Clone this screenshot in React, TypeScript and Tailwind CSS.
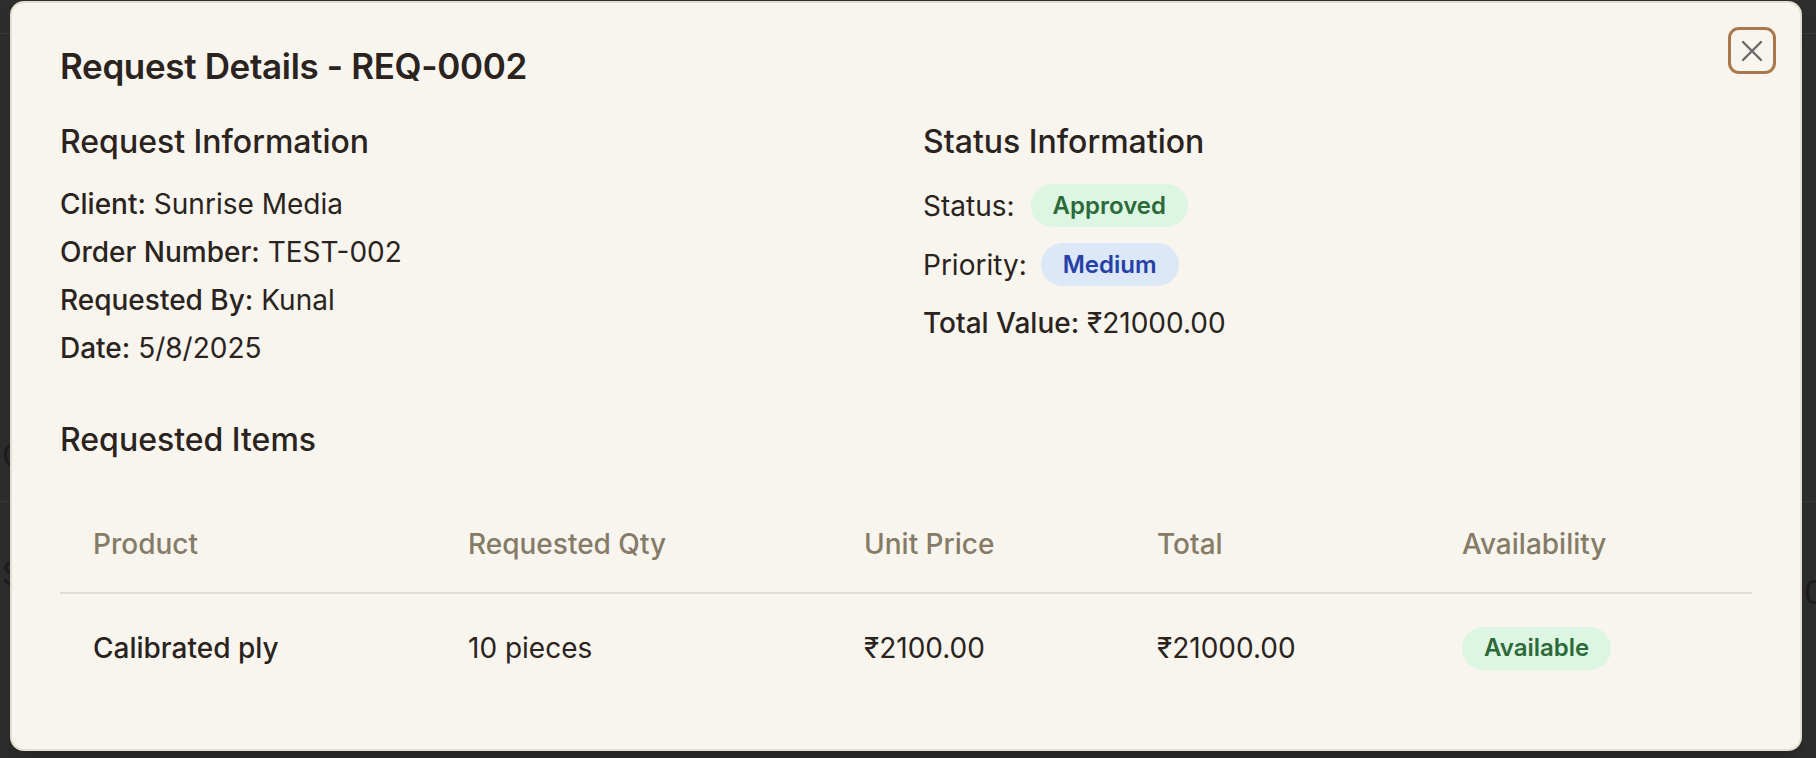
import { X } from "lucide-react";

const cols = ["Product", "Requested Qty", "Unit Price", "Total", "Availability"];

function Badge({ tone, children }: { tone: "green" | "blue"; children: React.ReactNode }) {
  const cls =
    tone === "green"
      ? "bg-[#ddf6e3] text-[#2c6a39]"
      : "bg-[#dce7f8] text-[#2541a6]";
  return (
    <span className={`inline-flex h-[43px] items-center rounded-full px-[22px] text-[24px] font-semibold ${cls}`}>
      {children}
    </span>
  );
}

function Field({ label, value }: { label: string; value: string }) {
  return (
    <p className="text-[28px] leading-[42px]">
      <span className="font-medium">{label}</span> {value}
    </p>
  );
}

export default function App() {
  return (
    <div className="relative h-[758px] w-full overflow-hidden bg-[#2d2d2d] font-['Inter',sans-serif]">
      {/* page behind the dialog, dimmed */}
      <div className="flex flex-col text-[32px] leading-[39px] text-[#1c1c1c]">
        <div className="h-[34px] border-b border-[#393939]" />
        <div className="h-[400px]" />
        <div className="flex h-[68px] items-start border-b border-[#393939] pl-[2px] pt-[2px]">
          <span className="w-[8px] overflow-hidden">C</span>
        </div>
        <div className="flex h-[96px] items-start justify-between pl-[2px] pt-[52px]">
          <span className="w-[8px] overflow-hidden">S</span>
          <span className="mt-[19px] w-[12px] overflow-hidden text-right">0</span>
        </div>
      </div>

      {/* dialog */}
      <div className="absolute left-[10px] top-[1px] flex h-[750px] w-[1792px] flex-col rounded-[14px] border-2 border-[#e3ded2] bg-[#f8f5ee] px-[48px] pt-[41px] text-[#2a2320] shadow-xl">
        <button className="absolute right-[24px] top-[24px] flex h-[47px] w-[48px] items-center justify-center rounded-[11px] border-[3px] border-[#a8784c] text-[#686868]">
          <X size={36} strokeWidth={1.6} />
        </button>

        <h2 className="text-[35px] leading-[44px] font-semibold tracking-[-0.01em]">Request Details - REQ-0002</h2>

        <div className="mt-[30px] grid grid-cols-2 gap-x-[34px]">
          <div>
            <h3 className="text-[32px] leading-[48px] font-medium">Request Information</h3>
            <div className="mt-[17px] flex flex-col gap-[6px]">
              <Field label="Client:" value="Sunrise Media" />
              <Field label="Order Number:" value="TEST-002" />
              <Field label="Requested By:" value="Kunal" />
              <Field label="Date:" value="5/8/2025" />
            </div>
          </div>
          <div>
            <h3 className="text-[32px] leading-[48px] font-medium">Status Information</h3>
            <div className="mt-[18px] flex flex-col gap-[16px] text-[28px] leading-[42px]">
              <div className="flex h-[43px] items-center gap-[16px]">
                <span>Status:</span>
                <Badge tone="green">Approved</Badge>
              </div>
              <div className="flex h-[43px] items-center gap-[14px]">
                <span>Priority:</span>
                <Badge tone="blue">Medium</Badge>
              </div>
              <p>
                <span className="font-medium">Total Value:</span> ₹21000.00
              </p>
            </div>
          </div>
        </div>

        <h3 className="mt-[47px] text-[32px] leading-[48px] font-medium">Requested Items</h3>

        <div className="mt-[32px] text-[28px]">
          <div className="grid h-[98px] grid-cols-[375px_396px_293px_305px_322px] items-center border-b-2 border-[#e2ddd2] font-medium text-[#857b67]">
            {cols.map((c) => (
              <div key={c} className="pl-[33px]">
                {c}
              </div>
            ))}
          </div>
          <div className="grid h-[107px] grid-cols-[375px_396px_293px_305px_322px] items-center">
            <div className="pl-[33px] font-medium">Calibrated ply</div>
            <div className="pl-[33px]">10 pieces</div>
            <div className="pl-[33px]">₹2100.00</div>
            <div className="pl-[33px]">₹21000.00</div>
            <div className="pl-[33px]">
              <Badge tone="green">Available</Badge>
            </div>
          </div>
        </div>
      </div>
    </div>
  );
}
